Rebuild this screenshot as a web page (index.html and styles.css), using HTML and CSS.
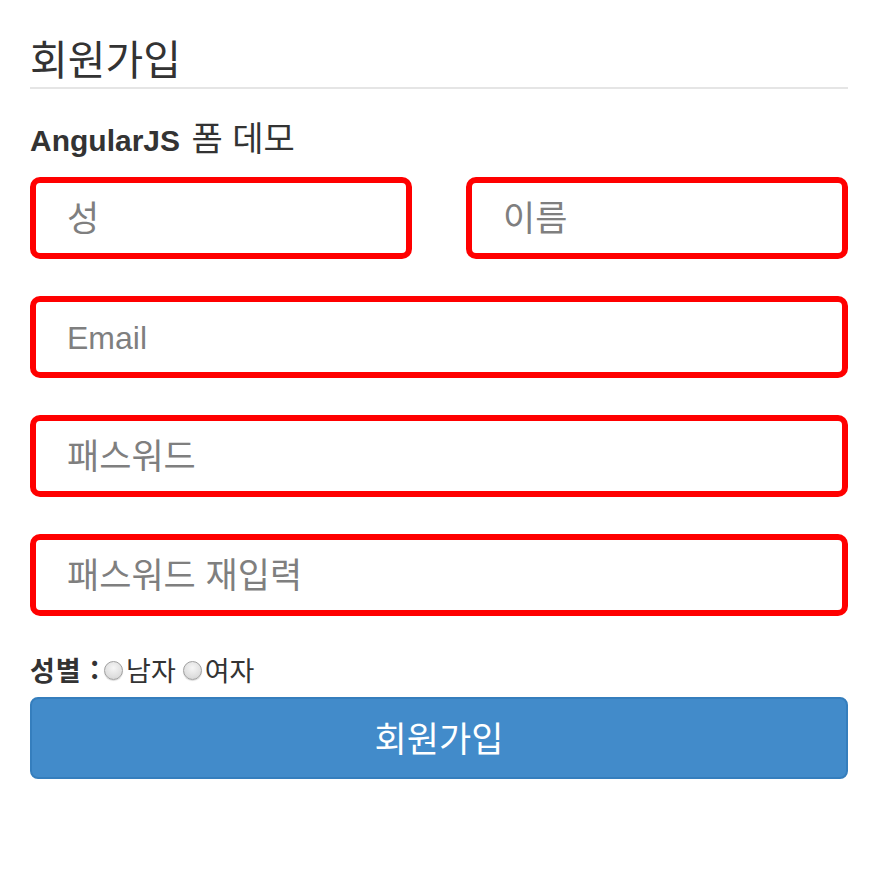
FILE: index.html
```html
<!DOCTYPE html>
<html lang="ko">
<head>
<meta charset="utf-8">
<title>회원가입</title>
<link rel="stylesheet" href="styles.css">
</head>
<body>
<div class="container">
  <h1 class="page-title">회원가입</h1>
  <h2 class="subtitle">AngularJS <span class="ko">폼 데모</span></h2>
  <form class="form">
    <div class="row">
      <input class="field field-ko" type="text" placeholder="성">
      <input class="field field-ko" type="text" placeholder="이름">
    </div>
    <input class="field field-en" type="email" placeholder="Email">
    <input class="field field-ko" type="password" placeholder="패스워드">
    <input class="field field-ko" type="password" placeholder="패스워드 재입력">
    <div class="gender">
      <span class="gender-label">성별 :</span>
      <label class="opt"><span class="radio"></span>남자</label>
      <label class="opt"><span class="radio"></span>여자</label>
    </div>
    <button class="submit" type="button">회원가입</button>
  </form>
</div>
</body>
</html>
```

FILE: styles.css
```css
* { box-sizing: border-box; }
html, body { margin: 0; padding: 0; background: #fff; }
body {
  font-family: "Liberation Sans", "Noto Sans CJK KR", sans-serif;
  color: #333;
}
.container {
  width: 818px;
  margin-left: 30px;
  padding-top: 36px;
}
.page-title {
  margin: 0;
  font-family: "Noto Sans CJK KR", sans-serif;
  font-weight: 400;
  font-size: 41px;
  line-height: 42px;
  padding-bottom: 9px;
  border-bottom: 2px solid #e5e5e5;
  color: #333;
}
.subtitle {
  margin: 30px 0 18px;
  font-size: 30px;
  line-height: 36px;
  font-weight: 700;
  color: #333;
}
.subtitle .ko {
  font-family: "Noto Sans CJK KR", sans-serif;
  font-weight: 400;
  font-size: 34px;
  margin-left: 3px;
}
.form {
  display: flex;
  flex-direction: column;
  gap: 37px;
}
.row {
  display: flex;
  gap: 54px;
}
.row .field { flex: 1; min-width: 0; }
.field {
  display: block;
  width: 100%;
  height: 82px;
  border: 6px solid #ff0000;
  border-radius: 10px;
  padding: 2px 25px 0 31px;
  font-family: "Liberation Sans", "Noto Sans CJK KR", sans-serif;
  color: #555;
  background: #fff;
  outline: none;
}
.field-ko { font-size: 35px; }
.field-en { font-size: 32px; }
.field::placeholder { color: #7f7f7f; opacity: 1; }
.gender {
  display: flex;
  align-items: center;
  height: 30px;
  margin-top: 1px;
  margin-bottom: -24px;
  font-family: "Noto Sans CJK KR", sans-serif;
  font-size: 27px;
  color: #333;
}
.gender-label { font-weight: 700; margin-right: 2px; letter-spacing: 1px; }
.opt {
  display: flex;
  align-items: center;
  margin-right: 5px;
}
.radio {
  display: inline-block;
  width: 19px;
  height: 19px;
  border-radius: 50%;
  border: 1px solid #a0a0a0;
  background: radial-gradient(circle at 50% 35%, #f6f6f6 0%, #dedede 65%, #cccccc 100%);
  box-shadow: 0 1px 1px rgba(0,0,0,0.15);
  margin: 3px 3px 0 2px;
}
.submit {
  display: block;
  width: 100%;
  height: 82px;
  border: 2px solid #357ebd;
  border-radius: 8px;
  background: #428bca;
  color: #fff;
  font-family: "Noto Sans CJK KR", sans-serif;
  font-size: 35px;
  padding: 0 0 4px;
  cursor: pointer;
}
```
